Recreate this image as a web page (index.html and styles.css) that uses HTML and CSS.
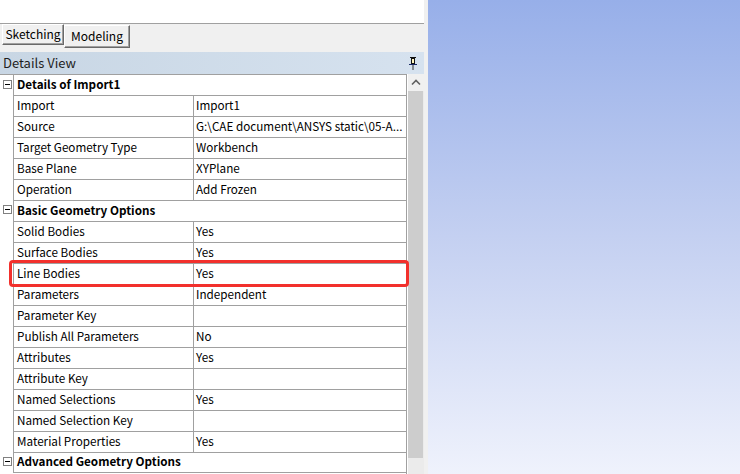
FILE: index.html
```html
<!DOCTYPE html>
<html>
<head>
<meta charset="utf-8">
<link rel="stylesheet" href="styles.css">
</head>
<body>
<div class="app">
  <div class="left">
    <div class="topblank"></div>
    <div class="tabbar">
      <div class="tab">Sketching</div>
      <div class="tab tab-b">Modeling</div>
    </div>
    <div class="header">
      <span class="htitle">Details View</span>
      <svg class="pin" width="8" height="13" viewBox="0 0 8 13">
        <rect x="1" y="0" width="6" height="1" fill="#111"/>
        <rect x="2.5" y="1.5" width="3" height="5" fill="#fff6c0" stroke="#111" stroke-width="1"/>
        <rect x="0" y="7" width="8" height="1" fill="#1a2a66"/>
        <rect x="3.5" y="8" width="1" height="5" fill="#333"/>
      </svg>
    </div>
    <div class="body">
      <div class="grid">
        <div class="row cat first"><div class="tree"><span class="minus"></span></div><div class="catlabel">Details of Import1</div></div>
        <div class="row"><div class="tree"></div><div class="prop">Import</div><div class="val">Import1</div></div>
        <div class="row"><div class="tree"></div><div class="prop">Source</div><div class="val">G:\CAE document\ANSYS static\05-A...</div></div>
        <div class="row"><div class="tree"></div><div class="prop">Target Geometry Type</div><div class="val">Workbench</div></div>
        <div class="row"><div class="tree"></div><div class="prop">Base Plane</div><div class="val">XYPlane</div></div>
        <div class="row"><div class="tree"></div><div class="prop">Operation</div><div class="val">Add Frozen</div></div>
        <div class="row cat"><div class="tree"><span class="minus"></span></div><div class="catlabel">Basic Geometry Options</div></div>
        <div class="row"><div class="tree"></div><div class="prop">Solid Bodies</div><div class="val">Yes</div></div>
        <div class="row"><div class="tree"></div><div class="prop">Surface Bodies</div><div class="val">Yes</div></div>
        <div class="row"><div class="tree"></div><div class="prop">Line Bodies</div><div class="val">Yes</div></div>
        <div class="row"><div class="tree"></div><div class="prop">Parameters</div><div class="val">Independent</div></div>
        <div class="row"><div class="tree"></div><div class="prop">Parameter Key</div><div class="val"></div></div>
        <div class="row"><div class="tree"></div><div class="prop">Publish All Parameters</div><div class="val">No</div></div>
        <div class="row"><div class="tree"></div><div class="prop">Attributes</div><div class="val">Yes</div></div>
        <div class="row"><div class="tree"></div><div class="prop">Attribute Key</div><div class="val"></div></div>
        <div class="row"><div class="tree"></div><div class="prop">Named Selections</div><div class="val">Yes</div></div>
        <div class="row"><div class="tree"></div><div class="prop">Named Selection Key</div><div class="val"></div></div>
        <div class="row"><div class="tree"></div><div class="prop">Material Properties</div><div class="val">Yes</div></div>
        <div class="row cat last"><div class="tree"><span class="minus"></span></div><div class="catlabel">Advanced Geometry Options</div></div>
      </div>
      <div class="scrollbar">
        <div class="sb-up">
          <svg width="10" height="7" viewBox="0 0 10 7"><path d="M1 5.5 L5 1.5 L9 5.5" fill="none" stroke="#606060" stroke-width="1.6"/></svg>
        </div>
        <div class="sb-thumb"></div>
      </div>
    </div>
    <div class="highlight"></div>
  </div>
  <div class="sep"></div>
  <div class="viewport"></div>
</div>
</body>
</html>
```

FILE: styles.css
```css
html, body {
  margin: 0;
  padding: 0;
  background: #ffffff;
}
.app {
  display: flex;
  width: 740px;
  height: 474px;
  overflow: hidden;
  font-family: "Noto Sans CJK SC", "Noto Sans", sans-serif;
  font-size: 11.7px;
  color: #000;
}
.left {
  position: relative;
  width: 424px;
  display: flex;
  flex-direction: column;
  background: #f0f0f0;
}
.topblank {
  height: 23px;
  background: #ffffff;
  border-bottom: 1px solid #a0a0a0;
  flex: none;
}
.tabbar {
  height: 28px;
  flex: none;
  display: flex;
  align-items: flex-start;
  padding-left: 2px;
  background: #f0f0f0;
  font-size: 12px;
}
.tab {
  box-sizing: border-box;
  height: 21px;
  width: 62px;
  background: #f0f0f0;
  border-top: 1px solid #ffffff;
  border-left: 1px solid #ffffff;
  border-right: 1px solid #696969;
  border-bottom: 1px solid #696969;
  box-shadow: inset -1px -1px 0 #a0a0a0;
  display: flex;
  align-items: center;
  justify-content: center;
  line-height: 1;
  padding-bottom: 2px;
}
.tab-b {
  width: 66px;
  height: 23px;
  margin-top: 1px;
  padding-top: 1px;
}
.header {
  flex: none;
  height: 22px;
  box-sizing: border-box;
  display: flex;
  align-items: center;
  justify-content: space-between;
  padding: 0 7px 2px 3px;
  background: linear-gradient(to right, #c8d6e4, #d6e2ef);
  font-size: 13px;
  color: #1e1e1e;
  line-height: 1;
}
.pin {
  display: block;
  margin-top: 2px;
}
.body {
  flex: 1;
  display: flex;
  background: #ffffff;
  overflow: hidden;
}
.grid {
  width: 407px;
  box-sizing: border-box;
  border-right: 1px solid #a0a0a0;
  display: flex;
  flex-direction: column;
  margin-right: 1px;
}
.row {
  display: grid;
  grid-template-columns: 14px 180px 1fr;
  height: 21px;
  flex: none;
}
.row.cat {
  grid-template-columns: 14px 1fr;
}
.tree {
  border-right: 1px solid #a0a0a0;
  position: relative;
}
.row.first .tree {
  border-top: 1px solid #a0a0a0;
}
.prop, .val, .catlabel {
  border-top: 1px solid #a0a0a0;
  display: flex;
  align-items: center;
  white-space: nowrap;
  overflow: hidden;
  line-height: 1;
  padding-bottom: 3px;
}
.prop {
  border-right: 1px solid #a0a0a0;
  padding-left: 3px;
}
.val {
  padding-left: 2px;
}
.catlabel {
  padding-left: 3px;
  font-weight: bold;
}
.row.last .catlabel {
  border-bottom: 1px solid #a0a0a0;
}
.minus {
  position: absolute;
  left: 3px;
  top: 5px;
  width: 9px;
  height: 9px;
  box-sizing: border-box;
  border: 1px solid #808080;
  background: #fff;
}
.minus::after {
  content: "";
  position: absolute;
  left: 1px;
  top: 3px;
  width: 5px;
  height: 1px;
  background: #000;
}
.scrollbar {
  width: 16px;
  background: #ebebeb;
  display: flex;
  flex-direction: column;
}
.sb-up {
  height: 17px;
  background: #f0f0f0;
  display: flex;
  align-items: center;
  justify-content: center;
  padding-right: 1px;
}
.sb-up svg { display: block; }
.sb-thumb {
  width: 15px;
  height: 367px;
  background: #cdcdcd;
}
.highlight {
  position: absolute;
  left: 9px;
  top: 260px;
  width: 400px;
  height: 27px;
  box-sizing: border-box;
  border: 3px solid #f2302c;
  border-radius: 4px;
}
.sep {
  width: 4px;
  background: #f0f0f0;
}
.viewport {
  flex: 1;
  background: linear-gradient(to bottom, #97afe9 0%, #c4d0f1 50%, #eff2fc 100%);
}
```
